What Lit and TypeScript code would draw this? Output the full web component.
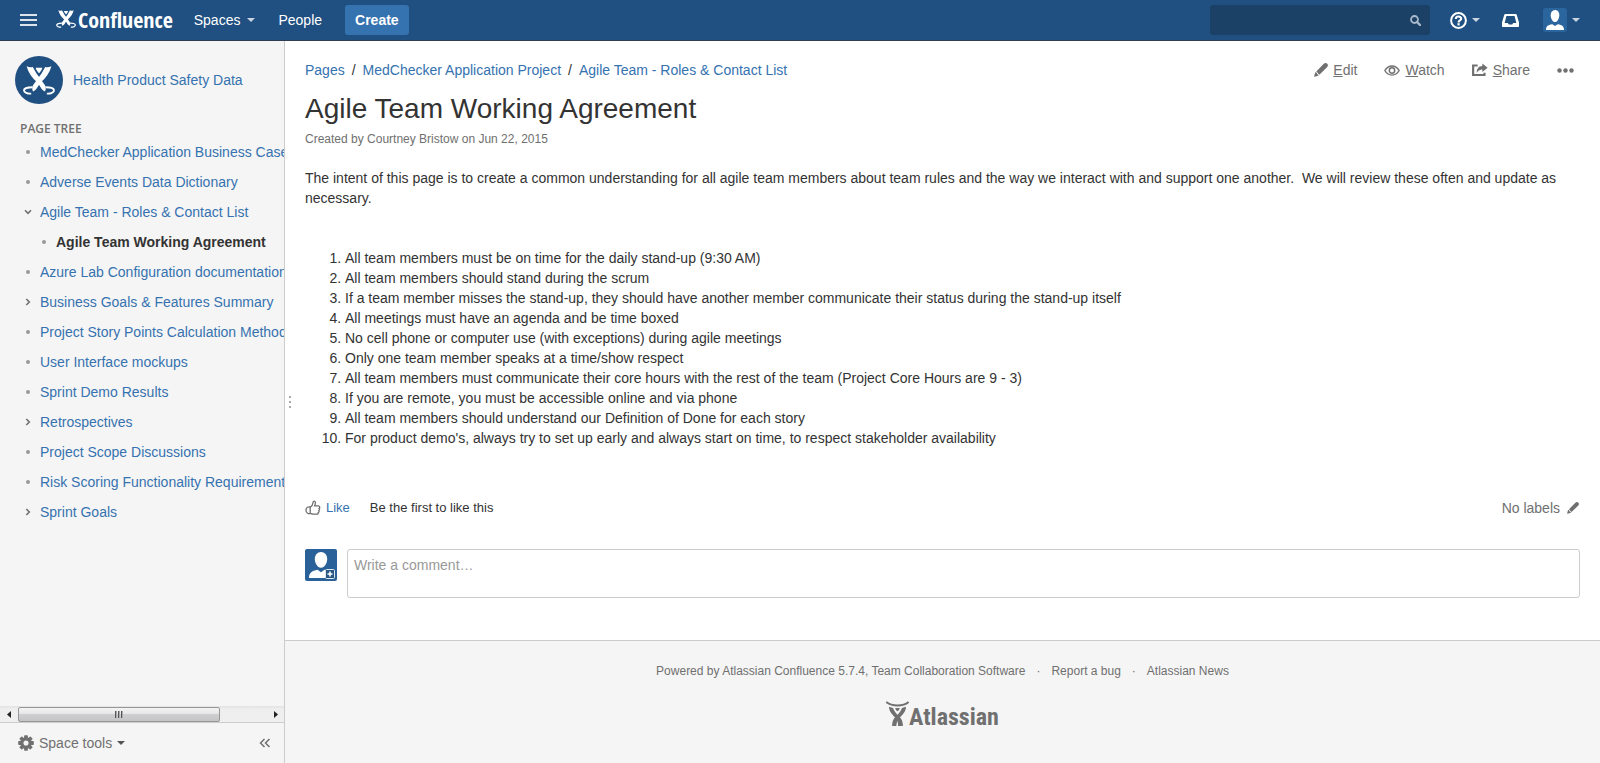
import { LitElement, html, css, svg, nothing } from "lit";
import { customElement } from "lit/decorators.js";
import { classMap } from "lit/directives/class-map.js";

interface TreeItem {
  title: string;
  state?: "open" | "closed";
  current?: boolean;
  nested?: boolean;
}

const TREE: TreeItem[] = [
  { title: "MedChecker Application Business Case" },
  { title: "Adverse Events Data Dictionary" },
  { title: "Agile Team - Roles & Contact List", state: "open" },
  { title: "Agile Team Working Agreement", current: true, nested: true },
  { title: "Azure Lab Configuration documentation" },
  { title: "Business Goals & Features Summary", state: "closed" },
  { title: "Project Story Points Calculation Method" },
  { title: "User Interface mockups" },
  { title: "Sprint Demo Results" },
  { title: "Retrospectives", state: "closed" },
  { title: "Project Scope Discussions" },
  { title: "Risk Scoring Functionality Requirements" },
  { title: "Sprint Goals", state: "closed" },
];

const RULES = [
  "All team members must be on time for the daily stand-up (9:30 AM)",
  "All team members should stand during the scrum",
  "If a team member misses the stand-up, they should have another member communicate their status during the stand-up itself",
  "All meetings must have an agenda and be time boxed",
  "No cell phone or computer use (with exceptions) during agile meetings",
  "Only one team member speaks at a time/show respect",
  "All team members must communicate their core hours with the rest of the team (Project Core Hours are 9 - 3)",
  "If you are remote, you must be accessible online and via phone",
  "All team members should understand our Definition of Done for each story",
  "For product demo's, always try to set up early and always start on time, to respect stakeholder availability",
];

// Crossed figure with swirling feet, drawn on a 32x29 grid.
const limb = "M3.600.3C5.600 1.200 8 1.500 9.800 1L13.500 7.600 17.500 13 22 19.200C23 21 23 23.500 22 25.400 20 24.800 18.600 23.200 17.400 21L14.500 16.600C9 12 5.200 6.500 3.600.3Z";
const figure = svg`
  <path fill="currentColor" d="M12.700 1.800H19.300C19 3.600 17.600 5.800 16 7.200 14.400 5.800 13 3.600 12.700 1.800Z"/>
  <path fill="currentColor" d=${limb}/>
  <path fill="currentColor" d=${limb} transform="translate(32 0) scale(-1 1)"/>
  <path fill="none" stroke="currentColor" stroke-width="1.900" d="M9.500 21.200C5 21.200 1 22.300 1 24.300 1 26.500 4.400 27.900 8.200 27.600M22.500 21.200C27 21.200 31 22.300 31 24.300 31 26.500 27.600 27.900 23.800 27.600"/>`;

const icon = (w: number, h: number, box: string, body: unknown) =>
  html`<svg width=${w} height=${h} viewBox=${box} aria-hidden="true">${body}</svg>`;

const pencil = (size: number) =>
  icon(size, size, "0 0 14 14", svg`
    <path fill="currentColor" d="M9.800.8C11-.2 12.400 0 13.300.8 14.100 1.600 14.200 3 13.200 4L5.400 11.700C5 11.100 4.600 10.700 3.900 10.500 3.800 9.700 3.200 9 2.300 8.500ZM1.700 9.100C2.500 9.500 2.900 10 3 11.100 3.900 11.200 4.400 11.600 4.700 12.300 3.600 13 2.200 13.600.2 13.800.5 11.900.8 10.300 1.700 9.100Z"/>`);

const caret = html`<span class="caret"></span>`;

const person = svg`
  <path fill="#fff" d="M12 2c2.700 0 4.300 2.200 4.300 5.200S14.500 14 12 14 7.700 10.200 7.700 7.200 9.300 2 12 2Z"/>
  <path fill="#fff" d="M3 22c0-3.400 1.400-5.200 6.300-5.800l2.700 1.900 2.700-1.900C19.600 16.800 21 18.600 21 22Z"/>`;

@customElement("app-root")
export class AppRoot extends LitElement {
  static styles = css`
    :host {
      display: flex;
      flex-direction: column;
      min-height: 100vh;
      font: 14px/20px "Liberation Sans", Arial, sans-serif;
      color: #333;
      background: #fff;
    }
    * { box-sizing: border-box; }
    a { color: #3572b0; text-decoration: none; }
    button { font: inherit; color: inherit; border: 0; padding: 0; background: none; cursor: pointer; }
    svg { display: block; flex: none; }
    .caret {
      width: 0;
      border: 4px solid transparent;
      border-top-color: currentColor;
      border-bottom: 0;
    }

    .top {
      display: flex;
      align-items: center;
      height: 41px;
      flex: none;
      padding: 0 20px;
      background: #205081;
      border-bottom: 1px solid #2e3d54;
      color: #fff;
    }
    .top a { color: #fff; }
    .menu { margin-right: 19px; color: #dbe3ec; }
    .brand {
      display: flex;
      align-items: center;
      gap: 2px;
      margin-right: 21px;
      font: 700 22px/30px "Open Sans Condensed", "Roboto Condensed", sans-serif;
    }
    .brand svg { margin-bottom: 2px; }
    .brand span { margin-bottom: 3px; }
    .nav { display: flex; align-items: center; gap: 23px; }
    .drop { display: flex; align-items: center; gap: 7px; }
    .drop .caret { color: #c9d5e2; }
    .create {
      height: 30px;
      padding: 0 10px;
      border-radius: 3px;
      background: #3572b0;
      font-weight: 700;
    }
    .tools { display: flex; align-items: center; margin-left: auto; }
    .search {
      display: flex;
      align-items: center;
      width: 220px;
      height: 30px;
      padding: 0 9px 0 10px;
      margin-right: 20px;
      border-radius: 3px;
      background: #1b4166;
      color: #a9b9ca;
    }
    .search input {
      flex: 1;
      min-width: 0;
      border: 0;
      outline: 0;
      background: none;
      color: #fff;
      font: inherit;
    }
    .help { gap: 5px; margin-right: 22px; }
    .inbox { margin-right: 24px; }
    .user { gap: 5px; }

    .body { display: flex; flex: 1; min-height: 0; }
    .side {
      display: flex;
      flex-direction: column;
      flex: none;
      width: 285px;
      border-right: 1px solid #ccc;
      background: #f5f5f5;
      position: relative;
    }
    .space { display: flex; align-items: center; gap: 10px; padding: 15px 15px 17px; }
    .badge {
      display: grid;
      place-items: center;
      width: 48px;
      height: 48px;
      border-radius: 50%;
      background: #205081;
      color: #fff;
    }
    .heading {
      margin: 0;
      padding: 0 20px;
      font: 600 12px/16px "Open Sans", sans-serif;
      color: #707070;
    }
    .tree { list-style: none; margin: 0; padding: 0; flex: 1; overflow: hidden; }
    .node { display: flex; align-items: center; height: 30px; padding-left: 20px; white-space: nowrap; }
    .nested { padding-left: 36px; }
    .mark { display: grid; place-items: center; flex: none; width: 16px; height: 16px; margin-right: 4px; color: #707070; }
    .dot { width: 4px; height: 4px; border-radius: 50%; background: #999; }
    .current { color: #333; font-weight: 700; }
    .scroll {
      display: flex;
      align-items: center;
      height: 16px;
      flex: none;
      background: linear-gradient(#e3e3e3, #eee 3px, #efefef);
    }
    .arrow { display: grid; place-items: center; width: 17px; height: 16px; color: #222; }
    .thumb {
      display: flex;
      justify-content: center;
      align-items: center;
      gap: 1px;
      width: 202px;
      height: 15px;
      margin-left: 1px;
      margin-right: auto;
      border: 1px solid #979797;
      border-radius: 2px;
      background: linear-gradient(#f4f4f4, #e6e6e6 45%, #cfcfd1 50%, #c4c4c6);
    }
    .grip { width: 2px; height: 7px; background: linear-gradient(90deg, #555 50%, #aaa 50%); }
    .foot {
      display: flex;
      align-items: center;
      height: 41px;
      flex: none;
      padding: 0 13px 0 18px;
      border-top: 1px solid #ccc;
      color: #707070;
    }
    .foot .tool { display: flex; align-items: center; gap: 5px; margin-right: auto; }
    .foot .caret { color: #555; }
    .handle {
      position: absolute;
      left: 100%;
      top: 0;
      bottom: 0;
      width: 12px;
      display: flex;
      flex-direction: column;
      align-items: center;
      justify-content: center;
      gap: 3px;
      cursor: ew-resize;
    }
    .handle span { width: 2px; height: 2px; background: #aaa; }

    .main { display: flex; flex-direction: column; flex: 1; min-width: 0; }
    .page { padding: 19px 20px 42px; }
    .bar { display: flex; align-items: center; justify-content: space-between; }
    .crumbs { display: flex; list-style: none; margin: 0; padding: 0; }
    .crumbs li + li::before { content: "/"; padding: 0 7px; }
    .actions { display: flex; align-items: center; gap: 27px; color: #707070; }
    .actions a { display: flex; align-items: center; gap: 5px; color: #707070; }
    .actions .more { padding-right: 6px; }
    h1 { margin: 11px 0 0; font-size: 28px; line-height: 36px; font-weight: 400; }
    .meta { margin: 2px 0 0; font-size: 12px; line-height: 20px; color: #707070; }
    .meta a { color: #707070; }
    .intro { margin: 19px 0 40px; }
    .rules { margin: 0; padding-left: 40px; }
    .social { display: flex; align-items: center; margin-top: 50px; font-size: 13px; height: 20px; }
    .like { display: flex; align-items: center; gap: 5px; margin-right: 20px; }
    .labels { display: flex; align-items: center; gap: 7px; margin-left: auto; padding-right: 1px; font-size: 14px; color: #707070; }
    .comment { display: flex; gap: 10px; margin-top: 31px; align-items: flex-start; }
    .comment textarea {
      display: block;
      flex: 1;
      height: 49px;
      padding: 5px 6px;
      border: 1px solid #ccc;
      border-radius: 3px;
      outline: 0;
      resize: none;
      font: inherit;
      color: #333;
    }
    .comment textarea::placeholder { color: #999; opacity: 1; }

    .footer {
      display: flex;
      flex-direction: column;
      align-items: center;
      gap: 20px;
      flex: 1;
      padding-top: 20px;
      border-top: 1px solid #ccc;
      background: #f5f5f5;
      color: #707070;
      font-size: 12px;
    }
    .footer a { color: #707070; }
    .links { display: flex; list-style: none; margin: 0; padding: 0; }
    .links li + li::before { content: "·"; padding: 0 11px; }
    .vendor {
      display: flex;
      align-items: flex-end;
      font: 700 24px/26px "Roboto Condensed", "Open Sans Condensed", sans-serif;
    }
    .vendor svg { margin-bottom: -1px; margin-right: -4px; }
    .vendor span { line-height: 26px; margin-bottom: -5px; }
  `;

  private mark(item: TreeItem) {
    if (item.state === "open")
      return icon(8, 6, "0 0 8 6", svg`<path d="M1 1.300 4 4.300 7 1.300" fill="none" stroke="currentColor" stroke-width="1.600"/>`);
    if (item.state === "closed")
      return icon(6, 8, "0 0 6 8", svg`<path d="M1.300 1 4.300 4 1.300 7" fill="none" stroke="currentColor" stroke-width="1.600"/>`);
    return html`<span class="dot"></span>`;
  }

  private header() {
    return html`<header class="top">
      <button class="menu" aria-label="Menu">
        ${icon(17, 12, "0 0 17 12", svg`<path d="M0 1H17M0 6H17M0 11H17" stroke="currentColor" stroke-width="2"/>`)}
      </button>
      <a class="brand" href="#">${icon(20, 18, "0 0 32 29", figure)}<span>Confluence</span></a>
      <nav class="nav">
        <a class="drop" href="#">Spaces ${caret}</a>
        <a href="#">People</a>
        <button class="create">Create</button>
      </nav>
      <div class="tools">
        <div class="search">
          <input type="text" aria-label="Search" />
          ${icon(11, 11, "0 0 11 11", svg`<circle cx="4.500" cy="4.500" r="3.500" fill="none" stroke="currentColor" stroke-width="1.800"/><path d="M7 7 10 10" stroke="currentColor" stroke-width="2.400" stroke-linecap="round"/>`)}
        </div>
        <button class="drop help" aria-label="Help">
          ${icon(17, 17, "0 0 17 17", svg`<circle cx="8.500" cy="8.500" r="7.400" fill="none" stroke="currentColor" stroke-width="2"/><path d="M5.800 7C5.800 3.800 11.200 3.800 11.200 6.800 11.200 8.600 8.600 8.400 8.600 10.400" fill="none" stroke="currentColor" stroke-width="2.100"/><rect x="7.500" y="11.200" width="2.200" height="2.200" fill="currentColor"/>`)}${caret}
        </button>
        <button class="inbox" aria-label="Notifications">
          ${icon(17, 13, "0 0 17 13", svg`<path fill="currentColor" fill-rule="evenodd" d="M3.500 0H13.500C14.200 0 14.600.4 14.800 1L17 8.500V12C17 12.600 16.600 13 16 13H1C.4 13 0 12.600 0 12V8.500L2.200 1C2.400.4 2.800 0 3.500 0ZM4.400 2 2.700 9H5.800L6.800 10.400H10.200L11.200 9H14.300L12.600 2Z"/>`)}
        </button>
        <button class="drop user" aria-label="Profile">
          ${icon(24, 24, "0 0 24 24", svg`<rect width="24" height="24" rx="3" fill="#2b659e"/>${person}`)}${caret}
        </button>
      </div>
    </header>`;
  }

  private sidebar() {
    return html`<aside class="side">
      <a class="space" href="#"><span class="badge">${icon(32, 29, "0 0 32 29", figure)}</span>Health Product Safety Data</a>
      <h2 class="heading">PAGE TREE</h2>
      <ul class="tree">
        ${TREE.map(item => html`<li class=${classMap({ node: true, nested: !!item.nested })}>
          <span class="mark">${this.mark(item)}</span>
          <a href="#" class=${item.current ? "current" : nothing}>${item.title}</a>
        </li>`)}
      </ul>
      <div class="scroll" aria-hidden="true">
        <span class="arrow">${icon(4, 7, "0 0 4 7", svg`<path d="M4 0V7L0 3.500Z" fill="currentColor"/>`)}</span>
        <span class="thumb"><span class="grip"></span><span class="grip"></span><span class="grip"></span></span>
        <span class="arrow">${icon(4, 7, "0 0 4 7", svg`<path d="M0 0V7L4 3.500Z" fill="currentColor"/>`)}</span>
      </div>
      <div class="foot">
        <button class="tool">
          ${icon(16, 16, "0 0 17 17", svg`<g fill="currentColor">${[0, 45, 90, 135].map(a => svg`<rect x="6.500" y=".2" width="4" height="16.600" rx=".8" transform="rotate(${a} 8.500 8.500)"/>`)}<circle cx="8.500" cy="8.500" r="6.200"/></g><circle cx="8.500" cy="8.500" r="2.700" fill="#f5f5f5"/>`)}
          Space tools ${caret}
        </button>
        <button aria-label="Collapse sidebar">
          ${icon(12, 10, "0 0 12 10", svg`<path d="M5.500 1 1.500 5 5.500 9M10.500 1 6.500 5 10.500 9" fill="none" stroke="currentColor" stroke-width="1.500"/>`)}
        </button>
      </div>
      <div class="handle"><span></span><span></span><span></span></div>
    </aside>`;
  }

  render() {
    return html`${this.header()}
      <div class="body">
        ${this.sidebar()}
        <main class="main">
          <article class="page">
            <div class="bar">
              <ol class="crumbs">
                <li><a href="#">Pages</a></li>
                <li><a href="#">MedChecker Application Project</a></li>
                <li><a href="#">Agile Team - Roles &amp; Contact List</a></li>
              </ol>
              <div class="actions">
                <a href="#">${pencil(14)}<span><u>E</u>dit</span></a>
                <a href="#">${icon(16, 11, "0 0 16 11", svg`<path d="M.8 5.500C4.500-.6 11.500-.6 15.200 5.500 11.500 11.600 4.500 11.600.8 5.500Z" fill="none" stroke="currentColor" stroke-width="1.400"/><circle cx="8" cy="5.500" r="2.700" fill="none" stroke="currentColor" stroke-width="1.500"/>`)}<span><u>W</u>atch</span></a>
                <a href="#">${icon(16, 14, "0 0 17 14", svg`<path d="M6 2.200H1.200V12.300H13.300V10" fill="none" stroke="currentColor" stroke-width="2.300"/><path d="M11 .2 16.600 4.600 11 9V6.500C8.500 6.500 6.800 7.400 5 9.800 5 5.600 7 2.800 11 2.700Z" fill="currentColor"/>`)}<span><u>S</u>hare</span></a>
                <button class="more" aria-label="More actions">${icon(17, 5, "0 0 17 5", svg`<g fill="currentColor"><circle cx="2.500" cy="2.500" r="2.200"/><circle cx="8.500" cy="2.500" r="2.200"/><circle cx="14.500" cy="2.500" r="2.200"/></g>`)}</button>
              </div>
            </div>
            <h1>Agile Team Working Agreement</h1>
            <p class="meta">Created by <a href="#">Courtney Bristow</a> on <a href="#">Jun 22, 2015</a></p>
            <p class="intro">The intent of this page is to create a common understanding for all agile team members about team rules and the way we interact with and support one another.&nbsp; We will review these often and update as necessary.</p>
            <ol class="rules">${RULES.map(r => html`<li>${r}</li>`)}</ol>
            <div class="social">
              <a class="like" href="#">${icon(16, 16, "0 0 16 16", svg`<path d="M5.200 7.200C7.200 6 7.900 4.300 8.100 2.200 8.200.8 10.300.8 10.400 2.800 10.400 4 10 4.800 9.600 5.900H13.300C14.900 5.900 15.100 7.900 14.100 8.300 14.900 8.900 14.600 10.200 13.800 10.500 14.300 11.300 14 12.200 13.200 12.500 13.500 13.600 12.900 14.200 12 14.200H8.200C6.800 14.200 6.300 13.600 5.200 13.300M5.200 7C3.600 6.600 1 7 1 10.300 1 13.400 3.600 14 5.200 13.500Z" fill="none" stroke="#707070" stroke-width="1.300"/>`)}Like</a>
              <span>Be the first to like this</span>
              <span class="labels">No labels <button aria-label="Edit labels">${pencil(12)}</button></span>
            </div>
            <div class="comment">
              ${icon(32, 32, "0 0 32 32", svg`<rect width="32" height="32" rx="2" fill="#2a6199"/><path fill="#fff" d="M16 3c3.700 0 6.200 3 6.200 7s-2.500 8.700-6.200 8.700S9.800 14 9.800 10 12.300 3 16 3Z"/><path fill="#fff" d="M4 29c0-5 2.500-7 8.600-8.200L16 23.300l3.400-2.500C25 21.800 28 24 28 29Z"/><rect x="20.500" y="20.500" width="9" height="9" rx="1" fill="#2a5885" stroke="#dfe8f1"/><path d="M25 22.500V27.500M22.500 25H27.500" stroke="#fff" stroke-width="1.600"/>`)}
              <textarea aria-label="Comment" placeholder="Write a comment…"></textarea>
            </div>
          </article>
          <footer class="footer">
            <ul class="links">
              <li>Powered by <a href="#">Atlassian Confluence</a> 5.7.4, <a href="#">Team Collaboration Software</a></li>
              <li><a href="#">Report a bug</a></li>
              <li><a href="#">Atlassian News</a></li>
            </ul>
            <a class="vendor" href="#">${icon(27, 25, "0 0 27 25", svg`
              <path d="M.3.900C6 5.600 17 5.600 22.600.900" fill="none" stroke="currentColor" stroke-width="2"/>
              <path fill="currentColor" d="M9.200 7H13.800C13.500 8.500 12.600 9.600 11.500 10.300 10.400 9.600 9.500 8.500 9.200 7Z"/>
              <path fill="currentColor" d="M3 5.800 7 7C8.500 11 11 13.200 13.600 15.800 15.900 18.200 16.900 21 16.900 25H12.100C12.100 21.600 11.400 19 9.600 17 6.400 13.600 3.200 11.200 3 5.800Z"/>
              <path fill="currentColor" d="M20 5.800 16 7C14.500 11 12 13.200 9.400 15.800 7.100 18.200 6.100 21 6.100 25H10.300C10.500 21.600 11.600 19 13.400 17 16.600 13.600 19.800 11.200 20 5.800Z"/>`)}<span>Atlassian</span></a>
          </footer>
        </main>
      </div>`;
  }
}
